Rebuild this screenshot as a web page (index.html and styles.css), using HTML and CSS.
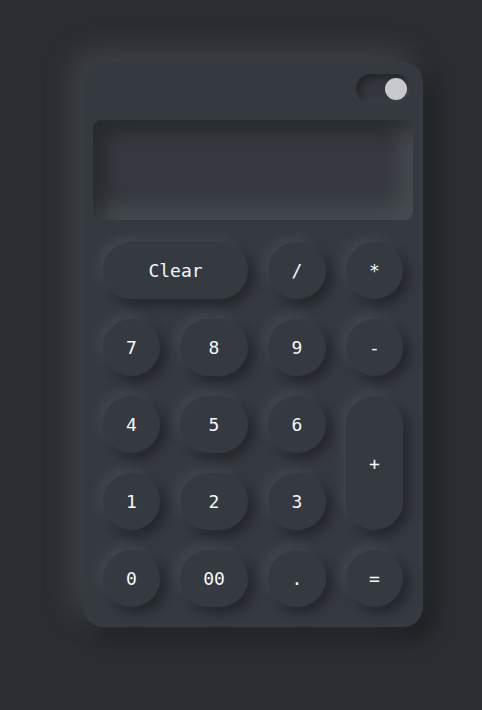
FILE: index.html
```html
<!DOCTYPE html>
<html lang="en">
<head>
<meta charset="utf-8">
<title>Calculator</title>
<link rel="stylesheet" href="styles.css">
</head>
<body>
<div class="page">
  <div class="calc">
    <div class="top">
      <div class="toggle"><span class="knob"></span></div>
    </div>
    <div class="display"></div>
    <div class="keys">
      <button class="key wide">Clear</button>
      <button class="key">/</button>
      <button class="key">*</button>
      <button class="key">7</button>
      <button class="key">8</button>
      <button class="key">9</button>
      <button class="key">-</button>
      <button class="key">4</button>
      <button class="key">5</button>
      <button class="key">6</button>
      <button class="key tall">+</button>
      <button class="key">1</button>
      <button class="key">2</button>
      <button class="key">3</button>
      <button class="key">0</button>
      <button class="key">00</button>
      <button class="key">.</button>
      <button class="key">=</button>
    </div>
  </div>
</div>
</body>
</html>
```
FILE: styles.css
```css
html, body {
  margin: 0;
  padding: 0;
  background: #2a2d31;
  height: 100%;
}
.page {
  display: flex;
  align-items: flex-start;
  padding: 62px 0 0 83px;
}
.calc {
  width: 340px;
  height: 565px;
  box-sizing: border-box;
  padding: 12px 10px 20px 10px;
  background: #353940;
  border-radius: 20px;
  box-shadow: -10px -10px 30px rgba(130, 135, 140, 0.26), 10px 10px 22px rgba(0, 0, 0, 0.34);
  display: flex;
  flex-direction: column;
}
.top {
  display: flex;
  justify-content: flex-end;
  padding-right: 3px;
}
.toggle {
  width: 54px;
  height: 29px;
  box-sizing: border-box;
  border-radius: 15px;
  background: #33373d;
  box-shadow: inset 4px 4px 7px rgba(0, 0, 0, 0.35), inset -3px -3px 6px rgba(120, 125, 130, 0.18);
  display: flex;
  align-items: center;
  justify-content: flex-end;
  padding-right: 3px;
}
.knob {
  width: 22px;
  height: 22px;
  border-radius: 50%;
  background: #c8c9ce;
}
.display {
  margin-top: 17px;
  height: 100px;
  border-radius: 8px;
  background: #363a40;
  box-shadow: inset 10px 10px 22px rgba(0, 0, 0, 0.34), inset -10px -10px 22px rgba(140, 145, 150, 0.26);
}
.keys {
  margin-top: 22px;
  padding: 0 10px;
  display: grid;
  grid-template-columns: 57px 68px 58px 57px;
  grid-template-rows: repeat(5, 57px);
  gap: 20px;
}
.key {
  border: none;
  margin: 0;
  padding: 0;
  border-radius: 999px;
  background: #353940;
  color: #f6f8fa;
  font-family: "DejaVu Sans Mono", "Liberation Mono", monospace;
  font-size: 18px;
  box-shadow: -5px -5px 12px rgba(130, 135, 140, 0.18), 6px 6px 12px rgba(0, 0, 0, 0.32);
  display: flex;
  align-items: center;
  justify-content: center;
}
.wide {
  grid-column: span 2;
}
.tall {
  grid-column: 4;
  grid-row: 3 / span 2;
}
```
